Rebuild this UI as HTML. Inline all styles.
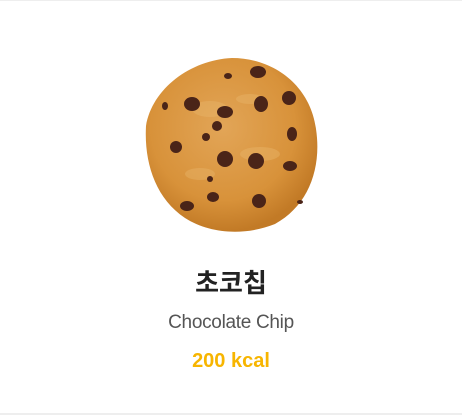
<!DOCTYPE html>
<html><head><meta charset="utf-8"><style>
html,body{margin:0;padding:0;background:#fff;}
body{width:462px;height:415px;position:relative;overflow:hidden;font-family:"Liberation Sans","Noto Sans CJK KR",sans-serif;}
.top{position:absolute;left:0;top:0;width:462px;height:1px;background:#eee;}
.bot{position:absolute;left:0;top:413px;width:462px;height:2px;background:#eeeeee;}
svg{position:absolute;left:140px;top:54px;}
.t{position:absolute;left:0;width:462px;text-align:center;}
.ko{top:265px;font-size:26px;font-weight:bold;color:#222;line-height:36px;}
.en{top:310px;font-size:19px;color:#555;line-height:26px;letter-spacing:-0.3px;}
.kc{top:347px;font-size:20px;font-weight:bold;color:#f7b500;line-height:28px;}
</style></head><body>
<div class="top"></div>
<svg width="182" height="182" viewBox="0 0 182 182">
<defs><radialGradient id="g" cx="45%" cy="40%" r="60%">
<stop offset="0" stop-color="#e2a557"/><stop offset="0.7" stop-color="#d8923a"/><stop offset="1" stop-color="#c27a26"/></radialGradient></defs>
<path d="M92 4 C132 4 170 30 176 75 C182 115 168 152 135 170 C105 182 70 180 45 164 C15 144 4 108 6 72 C12 35 50 6 92 4Z" fill="url(#g)"/>
<g fill="#eab86e" opacity="0.4">
<ellipse cx="70" cy="55" rx="18" ry="8"/><ellipse cx="120" cy="100" rx="20" ry="7"/><ellipse cx="60" cy="120" rx="15" ry="6"/><ellipse cx="110" cy="45" rx="14" ry="5"/>
</g>
<g fill="#4a2418">
<ellipse cx="52" cy="50" rx="8" ry="7"/><ellipse cx="85" cy="58" rx="8" ry="6"/><ellipse cx="118" cy="18" rx="8" ry="6"/><ellipse cx="121" cy="50" rx="7" ry="8"/>
<ellipse cx="149" cy="44" rx="7" ry="7"/><ellipse cx="77" cy="72" rx="5" ry="5"/><ellipse cx="66" cy="83" rx="4" ry="4"/><ellipse cx="152" cy="80" rx="5" ry="7"/>
<ellipse cx="36" cy="93" rx="6" ry="6"/><ellipse cx="85" cy="105" rx="8" ry="8"/><ellipse cx="116" cy="107" rx="8" ry="8"/><ellipse cx="150" cy="112" rx="7" ry="5"/>
<ellipse cx="73" cy="143" rx="6" ry="5"/><ellipse cx="119" cy="147" rx="7" ry="7"/><ellipse cx="47" cy="152" rx="7" ry="5"/><ellipse cx="25" cy="52" rx="3" ry="4"/>
<ellipse cx="88" cy="22" rx="4" ry="3"/><ellipse cx="70" cy="125" rx="3" ry="3"/><ellipse cx="160" cy="148" rx="3" ry="2"/>
</g>
</svg>
<div class="t ko">초코칩</div>
<div class="t en">Chocolate Chip</div>
<div class="t kc">200 kcal</div>
<div class="bot"></div>
</body></html>
